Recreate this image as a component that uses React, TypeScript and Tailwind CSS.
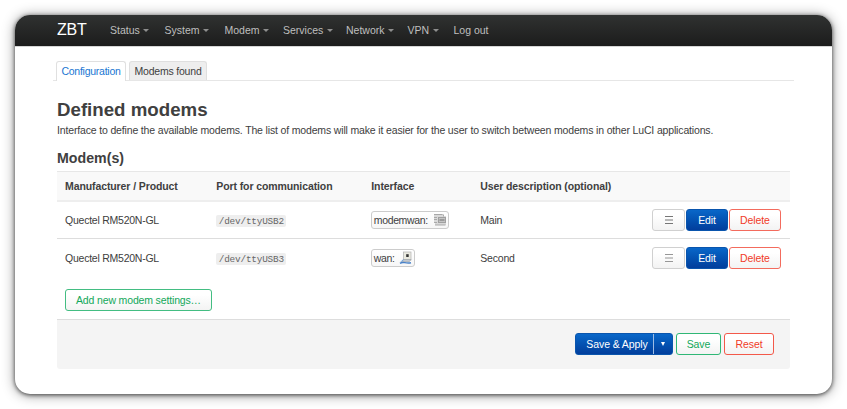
import React from "react";

const menu = [
  { label: "Status", width: "w-[54.5px]", caret: true },
  { label: "System", width: "w-[60px]", caret: true },
  { label: "Modem", width: "w-[58.5px]", caret: true },
  { label: "Services", width: "w-[63px]", caret: true },
  { label: "Network", width: "w-[61.5px]", caret: true },
  { label: "VPN", width: "w-[46px]", caret: true },
  { label: "Log out", width: "w-[60px]", caret: false },
];

const modems = [
  { name: "Quectel RM520N-GL", port: "/dev/ttyUSB2", iface: "modemwan:", icon: "modem", note: "Main" },
  { name: "Quectel RM520N-GL", port: "/dev/ttyUSB3", iface: "wan:", icon: "wan", note: "Second" },
];

const columns = "grid grid-cols-[151.25px_155px_109px_1fr] items-center pl-2 pr-[9px]";
const button =
  "flex h-[22px] shrink-0 items-center justify-center rounded-[3px] border bg-linear-to-b from-white from-25% to-[#f3f3f3]";
const primary = "border-[#0a55ad] bg-linear-to-b from-[#0967c9] to-[#023e9c] text-white";

function ModemIcon() {
  return (
    <svg width="14" height="14" viewBox="0 0 14 14" className="ml-[5px] shrink-0">
      <path d="M1 1h9v2h3v9H2V9H1z" fill="#d9d9d9" />
      <path d="M1 1.5h8.5M1 4.5h3M1 6.5h3M1 9.5h3M2 12h10.5" stroke="#a3a3a3" strokeWidth=".9" />
      <rect x="5.5" y="4.5" width="7" height="5" fill="#c4c4c4" stroke="#a0a0a0" />
      <path d="M6.5 7h5" stroke="#8c8c8c" strokeWidth="1.5" />
      <path d="M10.5 1.5v2" stroke="#aaa" />
    </svg>
  );
}

function WanIcon() {
  return (
    <svg width="14" height="14" viewBox="0 0 14 14" className="ml-[4px] shrink-0">
      <rect x="4.5" y="1" width="7.5" height="8" fill="#e9e9df" stroke="#b9b9b9" strokeWidth=".8" />
      <rect x="7.2" y="3.2" width="2.5" height="2.8" fill="#333" />
      <path d="M4 8.5h8l-1.5 2H3z" fill="#c3c8ce" stroke="#9a9fa4" strokeWidth=".6" />
      <path d="M1 12.3c3.5-2.5 5 .8 11-.6" fill="none" stroke="#4a82c8" strokeWidth="1.5" />
      <path d="M1.5 11 4.8 8.6" stroke="#79a7dc" />
    </svg>
  );
}

export default function App() {
  return (
    <div className="h-[409px] w-[847px] overflow-hidden bg-white p-[15px] font-['Liberation_Sans',Arial,sans-serif] text-[10.5px] leading-[14px] tracking-[-0.1px] text-[#404040]">
      <main className="h-[379px] w-[817px] overflow-hidden rounded-[15px] bg-white shadow-[0_1px_4px_rgba(0,0,0,0.65),0_1px_13px_rgba(0,0,0,0.42)]">
        <header className="flex h-[31px] items-center bg-linear-to-b from-[#303231] to-[#1c1c1c] pl-[42px] text-[#bfbfbf]">
          <a className="w-[53px] pb-[2px] text-[16px] leading-5 tracking-[-0.2px] text-white">ZBT</a>
          <nav className="flex pb-px tracking-[0px]">
            {menu.map((item) => (
              <a key={item.label} className={`flex items-center whitespace-nowrap ${item.width}`}>
                {item.label}
                {item.caret && (
                  <svg width="6" height="3" viewBox="0 0 6 3" className="ml-[3.5px] mt-px">
                    <path d="M0 0h6L3 3z" fill="#8e8e8e" />
                  </svg>
                )}
              </a>
            ))}
          </nav>
        </header>
        <div className="h-px bg-[#d6d6d6]" />

        <div className="ml-[38px] mt-[14px] flex h-5 w-[741px] gap-[3px] border-b border-[#e6e6e6] pl-[3px]">
          <a className="h-5 w-[70px] rounded-t-[3px] border border-b-0 border-[#e0e0e0] bg-white pt-[2px] text-center tracking-[-0.25px] text-[#1976d2]">Configuration</a>
          <a className="h-[19px] w-[78px] rounded-t-[3px] border border-b-0 border-[#dfdfdf] bg-[#eee] pt-[2px] text-center tracking-[-0.2px]">Modems found</a>
        </div>

        <div className="ml-[42px] w-[733px]">
          <h2 className="mt-[15px] text-[18.7px] font-bold leading-[28px] tracking-[0px]">Defined modems</h2>
          <p className="-mt-px whitespace-nowrap tracking-[-0.157px]">Interface to define the available modems. The list of modems will make it easier for the user to switch between modems in other LuCI applications.</p>
          <h3 className="mt-[11px] text-[14.2px] font-bold leading-5 tracking-[0px]">Modem(s)</h3>

          <div className={`${columns} mt-[3px] h-[31px] border-b-2 border-t border-b-[#eee] border-t-[#e7e7e7] bg-[#f9f9f9] font-bold`}>
            <span>Manufacturer / Product</span>
            <span>Port for communication</span>
            <span>Interface</span>
            <span>User description (optional)</span>
          </div>
          {modems.map((modem, index) => (
            <div key={modem.port} className={`${columns} ${index === 0 ? "h-[37px] border-b border-[#ddd]" : "h-[38px]"}`}>
              <span className="tracking-[-0.24px]">{modem.name}</span>
              <span className="flex pt-px">
                <code className="block h-[12px] rounded-[2px] bg-[#eee] px-[2.5px] font-['Liberation_Mono',monospace] text-[9.4px] leading-[13px] tracking-[-0.2px] text-[#666]">{modem.port}</code>
              </span>
              <span className="flex">
                <span className="flex h-[18px] items-center rounded-[3px] border border-[#ccc] bg-linear-to-b from-white to-[#f7f7f7] px-[1.5px] tracking-[-0.35px]">
                  {modem.iface}
                  {modem.icon === "modem" ? <ModemIcon /> : <WanIcon />}
                </span>
              </span>
              <div className="flex items-center justify-between">
                <span className="tracking-[-0.2px]">{modem.note}</span>
                <div className="flex gap-[1px]">
                  <button className={`${button} w-[33px] border-[#d0d0d0]`}>
                    <svg width="8" height="8" viewBox="0 0 8 8">
                      <path d="M0 .5h8M0 4h8M0 7.5h8" stroke={index === 0 ? "#666" : "#8b8b8b"} strokeWidth=".9" />
                    </svg>
                  </button>
                  <button className={`flex h-[22px] w-[42px] items-center justify-center rounded-[3px] border ${primary}`}>Edit</button>
                  <button className={`${button} w-[52px] border-[#f36b5d] text-[#f13b28]`}>Delete</button>
                </div>
              </div>
            </div>
          ))}

          <div className="flex h-[42px] pl-2 pt-[12px]">
            <button className={`${button} w-[147px] border-[#43bd82] tracking-[-0.15px] text-[#12a85a]`}>Add new modem settings…</button>
          </div>
          <footer className="flex h-[50px] justify-end gap-[3px] rounded-b-[3px] border-t border-[#ddd] bg-[#f4f4f4] pr-[16px] pt-[13px]">
            <div className={`flex h-[22px] w-[98px] overflow-hidden rounded-[3px] border ${primary}`}>
              <button className="w-[78px] border-r border-[#9dbce4] pl-[5px] text-center">Save &amp; Apply</button>
              <button className="flex flex-1 items-center justify-center">
                <svg width="4" height="4" viewBox="0 0 4 4">
                  <path d="M0 0h4L2 4z" fill="white" />
                </svg>
              </button>
            </div>
            <button className={`${button} w-[45px] border-[#2fb776] text-[#12a85a]`}>Save</button>
            <button className={`${button} w-[50px] border-[#f3594a] text-[#f13b28]`}>Reset</button>
          </footer>
        </div>
      </main>
    </div>
  );
}
